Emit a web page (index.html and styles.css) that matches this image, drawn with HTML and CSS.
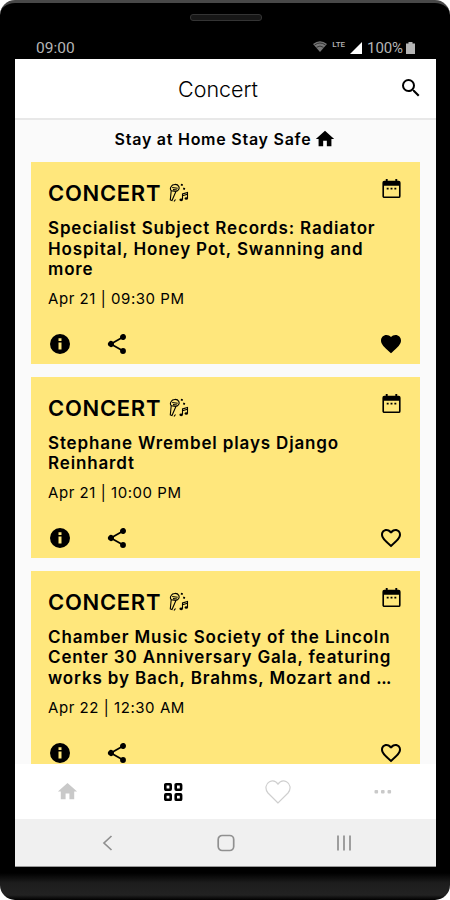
FILE: index.html
```
<!DOCTYPE html>
<html lang="en">

<head>
    <meta charset="UTF-8">
    <meta name="viewport" content="width=device-width, initial-scale=1.0">
    <title>Concert</title>
    <link rel="stylesheet" href="styles.css">
</head>

<body>
    <svg class="sprite" width="0" height="0">
        <symbol id="home" viewBox="0 0 24 24">
            <path d="M10 20v-6h4v6h5v-8h3L12 3 2 12h3v8z" />
        </symbol>
        <symbol id="search" viewBox="0 0 24 24">
            <path d="M15.5 14h-.79l-.28-.27A6.47 6.47 0 0 0 16 9.5 6.5 6.5 0 1 0 9.5 16c1.61 0 3.09-.59 4.23-1.57l.27.28v.79l5 4.99L20.49 19l-4.99-5zm-6 0a4.5 4.5 0 1 1 0-9 4.5 4.5 0 0 1 0 9z" />
        </symbol>
        <symbol id="calendar" viewBox="0 0 24 24">
            <path d="M9 11.300H7v1.700h2v-1.700zm4 0h-2v1.700h2v-1.700zm4 0h-2v1.700h2v-1.700zm2-7.300h-1V2h-2v2H8V2H6v2H4.500A2 2 0 0 0 2.500 6v14c0 1.100.9 2 2 2h15a2 2 0 0 0 2-2V6a2 2 0 0 0-2-2zm.8 16.400H4.200V9h15.600v11.400z" />
        </symbol>
        <symbol id="info" viewBox="0 0 24 24">
            <path d="M12 2a10 10 0 1 0 0 20 10 10 0 0 0 0-20zm1.500 15.500h-3v-7h3v7zm0-8.500h-3V6.300h3V9z" />
        </symbol>
        <symbol id="share" viewBox="0 0 24 24">
            <path d="M18 16.080c-.76 0-1.440.3-1.960.77L8.910 12.700c.05-.23.09-.46.09-.7s-.04-.47-.09-.7l7.050-4.110A3 3 0 1 0 15 5c0 .24.04.47.09.7L8.040 9.810A3 3 0 1 0 8.040 14.190l7.120 4.160c-.05.21-.08.43-.08.65a2.920 2.920 0 1 0 2.920-2.920z" />
        </symbol>
        <symbol id="heart" viewBox="0 0 24 24">
            <path d="M12 21.350l-1.450-1.320C5.400 15.360 2 12.280 2 8.500 2 5.420 4.420 3 7.500 3c1.740 0 3.410.81 4.500 2.090C13.090 3.810 14.760 3 16.500 3 19.580 3 22 5.420 22 8.500c0 3.780-3.400 6.860-8.550 11.540L12 21.350z" />
        </symbol>
        <symbol id="heart-line" viewBox="0 0 24 24">
            <path d="M16.500 3c-1.740 0-3.410.81-4.500 2.090C10.910 3.810 9.240 3 7.500 3 4.420 3 2 5.420 2 8.500c0 3.780 3.400 6.860 8.550 11.540L12 21.350l1.450-1.320C18.600 15.360 22 12.280 22 8.500 22 5.420 19.580 3 16.500 3zm-4.400 15.550l-.1.1-.1-.1C7.140 14.240 4 11.390 4 8.500 4 6.500 5.500 5 7.500 5c1.540 0 3.040.99 3.570 2.360h1.870C13.460 5.990 14.960 5 16.500 5c2 0 3.500 1.500 3.500 3.500 0 2.890-3.140 5.740-7.900 10.050z" />
        </symbol>
        <!-- microphone with notes -->
        <symbol id="mic" viewBox="0 0 20 20">
            <g fill="none" stroke="#000" stroke-width="1.100">
                <path d="M2.200 3.500C3.500.8 8.500.7 9.800 3.400c1 2.200-.4 4.600-2.900 5.100L3 17.500l-1.700-.6L2.200 7.700C1.200 6.500 1.200 4.900 2.200 3.500z" />
                <path d="M2.200 7.700l4.700.8M3.200 4.500l5.500.8M4 6.600l4 .4" />
                <path d="M13.500 16.500V11l5-1.500v6M13.500 12.700l5-1.400M5 18.500l1.500-2" />
            </g>
            <ellipse cx="12.200" cy="16.800" rx="1.800" ry="1.400" />
            <ellipse cx="17.300" cy="15.500" rx="1.700" ry="1.300" />
            <path d="M12 .8l2 .5-.5 1.700-1.800-.5zM14.500 4.500l1.800.7-.7 1.700-1.700-.7z" />
        </symbol>
    </svg>

    <div class="phone">
        <div class="speaker"></div>
        <div class="status">
            <span class="time">09:00</span>
            <svg class="wifi" viewBox="0 0 14 11">
                <path d="M0 3Q7-2.500 14 3L7 11z" opacity=".65" />
                <path d="M1.500 4Q7 0 12.500 4M3.500 6.300Q7 3.800 10.500 6.300" fill="none" stroke="#222" stroke-width=".8" />
            </svg>
            <span class="lte">LTE</span>
            <svg class="signal" viewBox="0 0 12 12"><path d="M12 0v12H0z" /></svg>
            <span class="percent">100%</span>
            <svg class="battery" viewBox="0 0 9 12"><path d="M2.500 0h4v1.500H9V12H0V1.500h2.500z" /></svg>
        </div>

        <div class="screen">
            <header class="header">
                <h1>Concert</h1>
                <svg class="search"><use href="#search" /></svg>
            </header>

            <main class="feed">
                <p class="notice">Stay at Home Stay Safe <svg><use href="#home" /></svg></p>

                <article class="card">
                    <div class="card-head">
                        <h2>CONCERT</h2>
                        <svg class="mic"><use href="#mic" /></svg>
                        <svg class="calendar"><use href="#calendar" /></svg>
                    </div>
                    <h3>Specialist Subject Records: Radiator<br>Hospital, Honey Pot, Swanning and<br>more</h3>
                    <p class="date">Apr 21 | 09:30 PM</p>
                    <div class="actions">
                        <svg><use href="#info" /></svg>
                        <svg><use href="#share" /></svg>
                        <svg class="like"><use href="#heart" /></svg>
                    </div>
                </article>

                <article class="card">
                    <div class="card-head">
                        <h2>CONCERT</h2>
                        <svg class="mic"><use href="#mic" /></svg>
                        <svg class="calendar"><use href="#calendar" /></svg>
                    </div>
                    <h3>Stephane Wrembel plays Django<br>Reinhardt</h3>
                    <p class="date">Apr 21 | 10:00 PM</p>
                    <div class="actions">
                        <svg><use href="#info" /></svg>
                        <svg><use href="#share" /></svg>
                        <svg class="like"><use href="#heart-line" /></svg>
                    </div>
                </article>

                <article class="card">
                    <div class="card-head">
                        <h2>CONCERT</h2>
                        <svg class="mic"><use href="#mic" /></svg>
                        <svg class="calendar"><use href="#calendar" /></svg>
                    </div>
                    <h3>Chamber Music Society of the Lincoln<br>Center 30 Anniversary Gala, featuring<br>works by Bach, Brahms, Mozart and <span class="dots">...</span></h3>
                    <p class="date">Apr 22 | 12:30 AM</p>
                    <div class="actions">
                        <svg><use href="#info" /></svg>
                        <svg><use href="#share" /></svg>
                        <svg class="like"><use href="#heart-line" /></svg>
                    </div>
                </article>
            </main>

            <nav class="tabs">
                <svg class="tab-home"><use href="#home" /></svg>
                <svg class="tab-grid" viewBox="0 0 20 20">
                    <g fill="none" stroke="#000" stroke-width="2.600">
                        <rect x="2.300" y="2.300" width="5.400" height="5.400" rx=".6" />
                        <rect x="12.700" y="2.300" width="5.400" height="5.400" rx=".6" />
                        <rect x="2.300" y="12.400" width="5.400" height="5.400" rx=".6" />
                        <rect x="12.700" y="12.400" width="5.400" height="5.400" rx=".6" />
                    </g>
                </svg>
                <svg class="tab-heart" viewBox="0 0 26 24">
                    <path d="M13 23L3 13C-.5 9 .8 3.500 4.500 1.700 7.500.3 11 1.200 13 4.200 15 1.200 18.500.3 21.500 1.700 25.200 3.500 26.500 9 23 13z" />
                </svg>
                <svg class="tab-more" viewBox="0 0 18 4">
                    <rect x=".5" width="3.600" height="3.600" rx="1" />
                    <rect x="7" width="3.600" height="3.600" rx="1" />
                    <rect x="13.500" width="3.600" height="3.600" rx="1" />
                </svg>
            </nav>

            <div class="softkeys">
                <svg viewBox="0 0 20 20"><path d="M13.500 3L6 10l7.500 7" /></svg>
                <svg viewBox="0 0 20 20"><rect x="2.200" y="2.500" width="15.500" height="15" rx="4" /></svg>
                <svg viewBox="0 0 20 20"><path d="M4 2.500v15M10 2.500v15M16 2.500v15" /></svg>
            </div>
        </div>
    </div>
</body>

</html>
```
FILE: styles.css
```
* {
    box-sizing: border-box;
}

body {
    margin: 0;
    background: #fff;
    font-family: Inter, "Liberation Sans", sans-serif;
    color: #000;
    overflow: hidden;
}

h1,
h2,
h3,
p {
    margin: 0;
}

svg {
    display: block;
    flex: none;
}

.sprite {
    position: absolute;
}

.phone {
    width: 450px;
    height: 900px;
    padding: 0 14px 0 15px;
    border-top: 3px solid #484848;
    border-radius: 15px;
    background: linear-gradient(#000 870px, #1d1d1d 880px, #222 892px, #000 897px);
    display: flex;
    flex-direction: column;
}

.speaker {
    width: 72px;
    height: 7px;
    margin: 11px auto 0;
    border: 1px solid #343434;
    border-radius: 3px;
    background: #171717;
}

.status {
    height: 38px;
    padding: 16px 21px 0 21px;
    display: flex;
    align-items: center;
    font-family: Roboto, sans-serif;
    font-size: 15px;
    color: #b5b5b5;
    fill: #b5b5b5;
}

.time {
    margin-right: auto;
    font-size: 15.500px;
}

.wifi {
    width: 14px;
    height: 11px;
    margin-top: -3px;
}

.lte {
    margin: -7px 5px 0 5px;
    font-size: 8px;
    font-weight: 500;
    line-height: 10px;
}

.signal {
    width: 12px;
    height: 12px;
    fill: #fff;
    margin-right: 5px;
}

.percent {
    letter-spacing: -0.100px;
}

.battery {
    width: 9px;
    height: 12px;
    margin-left: 3px;
}

.screen {
    height: 808px;
    background: #fafafa;
    display: flex;
    flex-direction: column;
}

.header {
    height: 61px;
    flex: none;
    padding: 0 15px 0 22px;
    display: flex;
    align-items: center;
    background: #fff;
    border-bottom: 2px solid #e8e8e8;
}

.header h1 {
    flex: 1;
    padding-top: 1px;
    text-align: center;
    font-size: 21.500px;
    font-weight: 300;
}

.search {
    width: 24px;
    height: 24px;
    margin: -1px -2px 0 0;
}

.feed {
    height: 644px;
    padding: 0 16px;
    overflow: hidden;
}

.notice {
    height: 42px;
    display: flex;
    justify-content: center;
    align-items: center;
    gap: 3px;
    padding-bottom: 4px;
    font-size: 16px;
    font-weight: 600;
    letter-spacing: 0.750px;
    white-space: nowrap;
}

.notice svg {
    width: 22px;
    height: 22px;
    margin-top: -1px;
}

.card {
    padding: 15px 17px 8px;
    margin-bottom: 12.500px;
    background: #ffe77c;
}

.card-head {
    height: 32px;
    display: flex;
    align-items: center;
}

.card h2 {
    font-size: 22px;
    font-weight: 600;
    letter-spacing: 0.700px;
}

.mic {
    width: 20px;
    height: 20px;
    margin-left: 8px;
}

.calendar {
    width: 23px;
    height: 23px;
    margin: -9px 0 0 auto;
}

.card h3 {
    margin-top: 9px;
    font-size: 17px;
    font-weight: 600;
    line-height: 20.700px;
    letter-spacing: 0.850px;
    white-space: nowrap;
}

.card h3 .dots {
    letter-spacing: -0.500px;
}

.date {
    margin-top: 10px;
    font-size: 15px;
    line-height: 18px;
    letter-spacing: 0.550px;
}

.actions {
    margin-top: 24px;
    height: 24px;
    display: flex;
    align-items: center;
    gap: 33px;
}

.actions svg {
    width: 24px;
    height: 24px;
}

.actions .like {
    margin-left: auto;
}

.tabs {
    height: 55px;
    flex: none;
    display: grid;
    grid-template-columns: repeat(4, 1fr);
    align-items: center;
    justify-items: center;
    background: #fff;
    fill: #c9c9c9;
}

.tab-home {
    width: 23px;
    height: 23px;
}

.tab-grid {
    width: 20px;
    height: 20px;
}

.tab-heart {
    width: 26px;
    height: 24px;
    fill: none;
    stroke: #cfcfcf;
    stroke-width: 1.200;
}

.tab-more {
    width: 18px;
    height: 4px;
}

.softkeys {
    flex: 1;
    display: flex;
    justify-content: space-between;
    align-items: center;
    padding: 0 82px 0 83px;
    background: #f0f0f0;
    border-bottom: 1px solid #999;
}

.softkeys svg {
    width: 20px;
    height: 20px;
    fill: none;
    stroke: #909090;
    stroke-width: 1.700;
}
```
